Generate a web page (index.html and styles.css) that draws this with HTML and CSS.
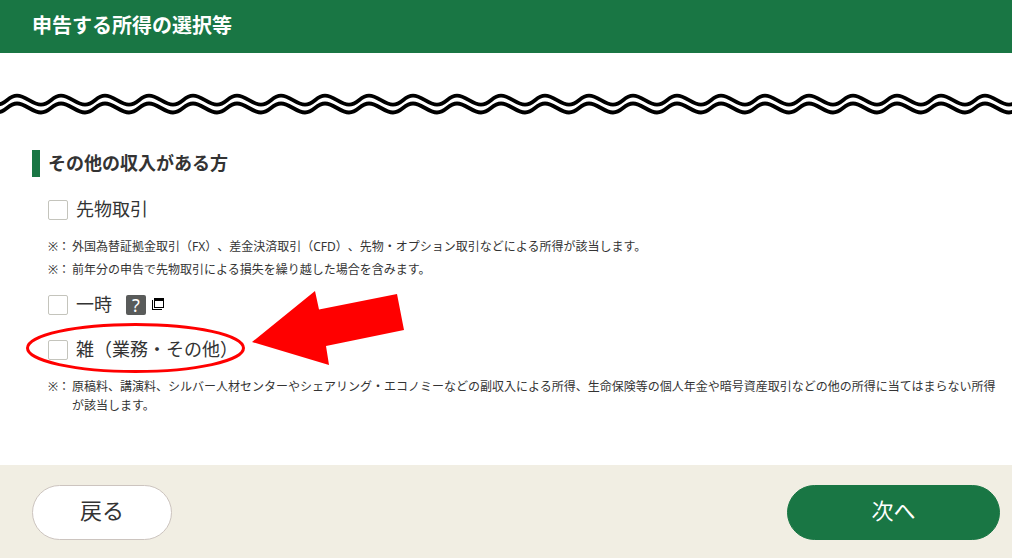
FILE: index.html
```html
<!DOCTYPE html>
<html lang="ja">
<head>
<meta charset="utf-8">
<meta name="viewport" content="width=device-width, initial-scale=1">
<title>申告する所得の選択等</title>
<link rel="stylesheet" href="styles.css">
</head>
<body>
<header class="page-header"><h1 class="page-title">申告する所得の選択等</h1></header>
<svg class="wave" aria-hidden="true">
  <defs>
    <pattern id="wave" width="44" height="24" patternUnits="userSpaceOnUse" x="17">
      <g fill="none" stroke="#000" stroke-width="3.8">
        <path d="M-20 12.700C-11 12.700-9 3.700 0 3.700C9 3.700 15 12.700 24 12.700C33 12.700 35 3.700 44 3.700C53 3.700 59 12.700 68 12.700"/>
        <path d="M-20 20.500C-11 20.500-9 11.500 0 11.500C9 11.500 15 20.500 24 20.500C33 20.500 35 11.500 44 11.500C53 11.500 59 20.500 68 20.500"/>
      </g>
    </pattern>
  </defs>
  <rect width="100%" height="24" fill="url(#wave)"/>
</svg>
<main class="content">
  <h2 class="section-title">その他の収入がある方</h2>
  <div class="options">
    <div class="option">
      <input class="check" type="checkbox" id="futures"><label for="futures">先物取引</label>
    </div>
    <ul class="notes">
      <li class="note"><span class="mark">※：</span><span>外国為替証拠金取引（FX）、差金決済取引（CFD）、先物・オプション取引などによる所得が該当します。</span></li>
      <li class="note"><span class="mark">※：</span><span>前年分の申告で先物取引による損失を繰り越した場合を含みます。</span></li>
    </ul>
    <div class="option">
      <input class="check" type="checkbox" id="temporary"><label for="temporary">一時</label>
      <a class="help" href="#"><span class="help-mark">?</span><svg class="window-icon" width="12" height="14" viewBox="0 0 12 14" aria-hidden="true" shape-rendering="crispEdges"><path d="M2 0h10v10H2zM3 3v6h8V3zM0 2h1v9h9v1H0z" fill="#000" fill-rule="evenodd"/></svg></a>
    </div>
    <div class="option spaced">
      <input class="check" type="checkbox" id="misc"><label for="misc">雑（業務・その他）</label>
      <svg class="callout" width="380" height="84" viewBox="0 0 380 84" aria-hidden="true">
        <ellipse cx="109.500" cy="59" rx="108" ry="23.500" fill="none" stroke="#f00" stroke-width="3"/>
        <path d="M226 53L289 2L293 20.500L371 5L378 41L300 57L303 76Z" fill="#f00"/>
      </svg>
    </div>
    <ul class="notes">
      <li class="note"><span class="mark">※：</span><span>原稿料、講演料、シルバー人材センターやシェアリング・エコノミーなどの副収入による所得、生命保険等の個人年金や暗号資産取引などの他の所得に当てはまらない所得が該当します。</span></li>
    </ul>
  </div>
</main>
<footer class="actions">
  <button class="btn btn-back" type="button">戻る</button>
  <button class="btn btn-next" type="button">次へ</button>
</footer>
</body>
</html>
```
FILE: styles.css
```css
* { box-sizing: border-box; }
body {
  margin: 0;
  min-height: 100vh;
  display: flex;
  flex-direction: column;
  background: #fff;
  color: #333;
  font-family: "Noto Sans", "Noto Sans CJK JP", sans-serif;
  text-spacing-trim: space-all;
}
.page-header {
  padding: 11px 32px 12px;
  background: #197644;
  color: #fff;
}
.page-title {
  margin: 0;
  font-size: 20px;
  line-height: 30px;
}
.wave {
  display: block;
  width: 100%;
  height: 24px;
  margin-top: 39px;
}
.content {
  flex: 1;
  padding: 34px 12px 38px 32px;
}
.section-title {
  margin: 0;
  padding-left: 8px;
  border-left: 8px solid #197644;
  font-size: 18px;
  line-height: 27px;
}
.options {
  padding: 19px 0 0 16px;
}
.option {
  position: relative;
  display: flex;
  align-items: center;
  gap: 8px;
  font-size: 18px;
  line-height: 27px;
}
.spaced { margin-top: 18px; }
.check {
  appearance: none;
  width: 20px;
  height: 20px;
  margin: 0;
  border: 1px solid #c4c4bc;
  border-radius: 2px;
  background: #fff;
}
.check:checked { background: #197644; }
.notes {
  display: grid;
  gap: 4px;
  margin: 0;
  padding: 14px 0 12px;
  list-style: none;
  font-size: 12px;
  line-height: 19px;
}
.note { display: flex; }
.mark { flex: 0 0 24px; }
.help {
  display: flex;
  align-items: center;
  gap: 6px;
  margin-left: 6px;
  color: #000;
  text-decoration: none;
}
.help-mark {
  width: 20px;
  height: 20px;
  border-radius: 2px;
  background: #595b5a;
  color: #fff;
  line-height: 20px;
  text-align: center;
}
.callout {
  position: absolute;
  left: -22px;
  bottom: -10px;
  pointer-events: none;
}
.actions {
  display: flex;
  justify-content: space-between;
  padding: 20px 12px 18px 32px;
  background: #f1eee3;
}
.btn {
  height: 55px;
  padding: 0 0 8px;
  border: 1px solid #197644;
  border-radius: 28px;
  font-family: inherit;
  font-size: 22px;
}
.btn-back {
  width: 140px;
  border-color: #ccc4bf;
  background: #fff;
  color: #333;
}
.btn-next {
  width: 213px;
  background: #197644;
  color: #fff;
}
```
